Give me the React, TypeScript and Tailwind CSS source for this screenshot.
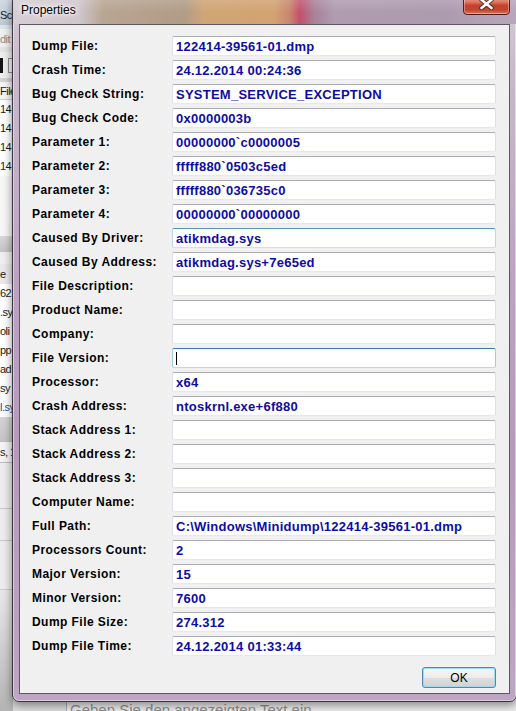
import React from "react";

type FieldState = "hover" | "focus";
type Row = { label: string; value?: string; state?: FieldState };

const rows: Row[] = [
  { label: "Dump File:", value: "122414-39561-01.dmp" },
  { label: "Crash Time:", value: "24.12.2014 00:24:36" },
  { label: "Bug Check String:", value: "SYSTEM_SERVICE_EXCEPTION" },
  { label: "Bug Check Code:", value: "0x0000003b" },
  { label: "Parameter 1:", value: "00000000`c0000005" },
  { label: "Parameter 2:", value: "fffff880`0503c5ed" },
  { label: "Parameter 3:", value: "fffff880`036735c0" },
  { label: "Parameter 4:", value: "00000000`00000000" },
  { label: "Caused By Driver:", value: "atikmdag.sys", state: "hover" },
  { label: "Caused By Address:", value: "atikmdag.sys+7e65ed" },
  { label: "File Description:" },
  { label: "Product Name:" },
  { label: "Company:" },
  { label: "File Version:", state: "focus" },
  { label: "Processor:", value: "x64" },
  { label: "Crash Address:", value: "ntoskrnl.exe+6f880" },
  { label: "Stack Address 1:" },
  { label: "Stack Address 2:" },
  { label: "Stack Address 3:" },
  { label: "Computer Name:" },
  { label: "Full Path:", value: "C:\\Windows\\Minidump\\122414-39561-01.dmp" },
  { label: "Processors Count:", value: "2" },
  { label: "Major Version:", value: "15" },
  { label: "Minor Version:", value: "7600" },
  { label: "Dump File Size:", value: "274.312" },
  { label: "Dump File Time:", value: "24.12.2014 01:33:44" },
];

function Field({ value, state }: { value?: string; state?: FieldState }) {
  const border =
    state === "focus"
      ? "border-t-[#3d7bad] border-x-[#a4c9e3] border-b-[#b7d9ed]"
      : state === "hover"
      ? "border-t-[#5794bf] border-x-[#b9d7ec] border-b-[#c7e2f1]"
      : "border-t-[#abadb3] border-x-[#dbdfe6] border-b-[#e3e9ef]";
  return (
    <div
      className={`flex h-[20px] w-[324px] items-center rounded-[2px] border bg-white pl-[3px] ${border}`}
    >
      {value && (
        <span className="whitespace-nowrap text-[13px] font-bold leading-none tracking-[0.25px] text-[#0c0ca6]">
          {value}
        </span>
      )}
      {state === "focus" && <span className="h-[13px] w-px bg-black" />}
    </div>
  );
}

// Strip of the application window that sits behind the dialog
function BackWindow() {
  return (
    <div className="absolute left-0 top-0 flex h-[711px] w-[13px] flex-col overflow-hidden bg-[#ececec] text-[11px] leading-[13px] tracking-[-0.5px] text-[#1a1a1a]">
      <div className="h-[25px] shrink-0 bg-[linear-gradient(180deg,#d3dbe5,#bfc9d6)] pt-[9px] whitespace-nowrap">
        Scr
      </div>
      <div className="h-[4px] shrink-0 bg-[#dde3ea]" />
      <div className="h-[18px] shrink-0 bg-[#f0f0f0] pt-[4px] whitespace-nowrap text-[#8a8a8a]">
        dit
      </div>
      <div className="h-[5px] shrink-0 bg-[#e4e4e4]" />
      <div className="flex h-[26px] shrink-0 items-center gap-[5px] bg-[#eeeeee]">
        <div className="h-[15px] w-[3px] bg-[#151515]" />
        <div className="h-[15px] w-[6px] border border-[#8a8a8a] bg-[#f4f4f4]" />
      </div>
      <div className="h-[4px] shrink-0 bg-[#d2d2d2]" />
      <div className="h-[18px] shrink-0 border-b border-[#d0d0d0] bg-[#f5f5f5] pt-[3px] whitespace-nowrap">
        File
      </div>
      {["14", "14", "14", "14"].map((t, i) => (
        <div key={i} className="flex h-[19px] shrink-0 items-center whitespace-nowrap bg-white">
          {t}
        </div>
      ))}
      <div className="h-[60px] shrink-0 bg-[#f6f6f6]" />
      <div className="h-[16px] shrink-0 bg-[linear-gradient(180deg,#d8d8d8,#c2c2c2)]" />
      <div className="h-[12px] shrink-0 bg-[#efefef]" />
      <div className="flex h-[20px] shrink-0 items-center whitespace-nowrap bg-[#e9e9e9]">
        e
      </div>
      {["62", ".sy", "oli", "pp", "ad", "sy", "l.sy"].map((t, i) => (
        <div
          key={i}
          className={`flex h-[19px] shrink-0 items-center whitespace-nowrap bg-white ${
            i === 6 ? "text-[#1c4fa0]" : ""
          }`}
        >
          {t}
        </div>
      ))}
      <div className="h-[24px] shrink-0 bg-[linear-gradient(180deg,#d4d4d4,#c4c4c4)]" />
      <div className="flex h-[22px] shrink-0 items-center whitespace-nowrap border-y border-[#bdbdbd] bg-[#f4f4f4]">
        s, 1
      </div>
      <div className="h-[46px] shrink-0 border-b border-[#c9c9c9] bg-[#ededed]" />
      <div className="h-[32px] shrink-0 border-b border-[#c9c9c9] bg-[#ededed]" />
      <div className="h-[49px] shrink-0 border-b border-[#c9c9c9] bg-[#ededed]" />
      <div className="flex-1 bg-[linear-gradient(180deg,#e8e8e8,#b4b4b4)]" />
    </div>
  );
}

export default function App() {
  return (
    <div
      className="relative h-[711px] w-[516px] overflow-hidden bg-[#dcdcdc]"
      style={{ fontFamily: '"Liberation Sans", Arial, sans-serif' }}
    >
      <BackWindow />

      {/* text box of the page underneath, peeking out below the dialog */}
      <div className="absolute left-[66px] top-[690px] h-[30px] w-[470px] border border-[#a9a9a9] bg-[#ececec] pl-[3px] pt-[10px] text-[15px] leading-[17px] text-[#8e8e8e] whitespace-nowrap">
        Geben Sie den angezeigten Text ein
      </div>

      {/* dialog window */}
      <div className="absolute left-[12px] top-[-6px] flex h-[708px] w-[505px] flex-col rounded-[7px] border border-[#3a3340] bg-[linear-gradient(180deg,#d6ccd6_0%,#c8b8ca_12%,#bca3c1_40%,#b69bbb_65%,#bda6c1_100%)] px-[6px] pb-[7px] shadow-[0_3px_10px_rgba(0,0,0,0.45),inset_0_0_0_1px_rgba(255,255,255,0.45)]">
        {/* title bar */}
        <div className="relative mx-[-6px] flex h-[29px] shrink-0 items-center rounded-t-[6px] bg-[linear-gradient(180deg,rgba(255,255,255,0.2),rgba(255,255,255,0)_60%),linear-gradient(90deg,#d6cdd5_0%,#d0c6cc_13%,#b8a592_18%,#b19c86_34%,#cfa574_38%,#d3a271_52%,#c8866f_55%,#c4506c_57%,#a8829a_60%,#b09cb0_64%,#ac9aae_86%,#b8a6bc_100%)] pl-[8px]">
          <span className="text-[12px] leading-none text-black [text-shadow:0_0_6px_#fff,0_0_10px_#fff,0_0_3px_#fff]">
            Properties
          </span>
          <div className="absolute right-[6px] top-[-1px] flex h-[21px] w-[47px] items-end justify-center rounded-b-[4px] border border-[#4b1f1a] bg-[linear-gradient(180deg,#e9ab9b_0%,#dc7d68_35%,#c7402a_55%,#c44630_80%,#d8785e_100%)] pb-[4px] shadow-[inset_0_0_0_1px_rgba(255,255,255,0.35)]">
            <svg width="15" height="12" viewBox="0 0 15 12">
              <path d="M2.5 1.8 L12.5 10 M12.5 1.8 L2.5 10" stroke="#3b1d18" strokeOpacity="0.75" strokeWidth="4.6" strokeLinecap="round" fill="none" />
              <path d="M2.5 1.8 L12.5 10 M12.5 1.8 L2.5 10" stroke="#ffffff" strokeWidth="2.6" strokeLinecap="round" fill="none" />
            </svg>
          </div>
        </div>

        {/* client area */}
        <div className="flex flex-1 flex-col border border-[#5d5860] bg-[#f0f0f0] pb-[5px] pl-[12px] pr-[13px] pt-[11px]">
          <div className="flex flex-col gap-[4px]">
            {rows.map((r) => (
              <div key={r.label} className="flex h-[20px] items-center">
                <div className="w-[140px] whitespace-nowrap text-[12px] font-bold leading-none tracking-[0.45px] text-black">
                  {r.label}
                </div>
                <Field value={r.value} state={r.state} />
              </div>
            ))}
          </div>
          <div className="mt-[11px] flex justify-end">
            <button className="flex h-[21px] w-[74px] items-center justify-center rounded-[3px] border border-[#3c8dc8] bg-[linear-gradient(180deg,#f6f6f6_0%,#ececec_50%,#dedede_51%,#d2d2d2_100%)] text-[12px] leading-none text-black shadow-[inset_0_0_0_1px_#9fdaf5]">
              OK
            </button>
          </div>
        </div>
      </div>
    </div>
  );
}
